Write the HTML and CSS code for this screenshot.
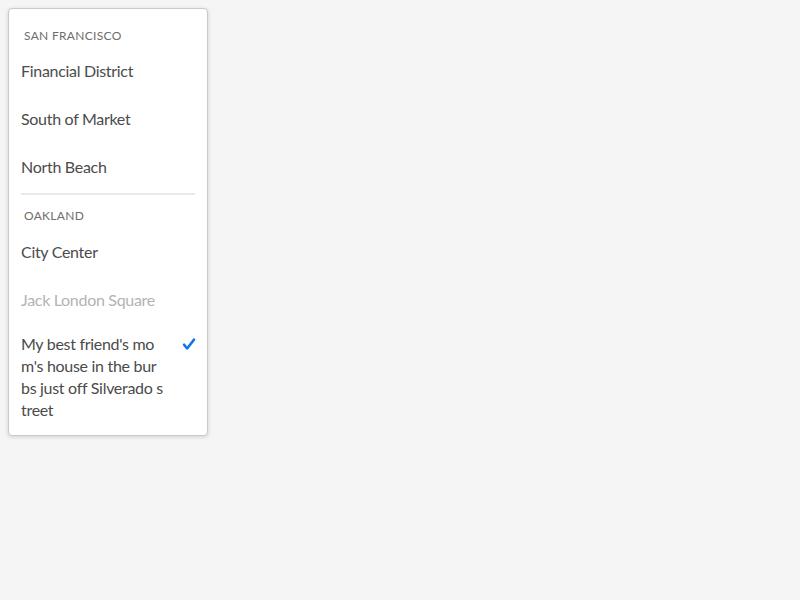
FILE: index.html
```html
<!DOCTYPE html>
<html lang="en">
<head>
<meta charset="utf-8">
<title>Menu</title>
<link rel="stylesheet" href="styles.css">
</head>
<body>
<div class="page">
  <div class="popover">
    <div class="menu" role="menu">
      <div class="section" role="group">
        <div class="heading">SAN FRANCISCO</div>
        <div class="item" role="menuitem"><span class="label">Financial District</span></div>
        <div class="item" role="menuitem"><span class="label">South of Market</span></div>
        <div class="item" role="menuitem"><span class="label">North Beach</span></div>
      </div>
      <div class="divider" role="separator"></div>
      <div class="section" role="group">
        <div class="heading">OAKLAND</div>
        <div class="item" role="menuitem"><span class="label">City Center</span></div>
        <div class="item is-disabled" role="menuitem" aria-disabled="true"><span class="label">Jack London Square</span></div>
        <div class="item is-selected" role="menuitemradio" aria-checked="true">
          <span class="label">My best friend's mom's house in the burbs just off Silverado street</span>
          <svg class="check" viewBox="0 0 14 14" aria-hidden="true"><path d="M5.125 12.625a1.25 1.25 0 0 1-.96-.45L1.04 8.425a1.25 1.25 0 0 1 1.92-1.6l2.136 2.563 5.922-7.536a1.25 1.25 0 1 1 1.964 1.545l-6.874 8.75a1.25 1.25 0 0 1-.965.478z"/></svg>
        </div>
      </div>
    </div>
  </div>
</div>
</body>
</html>
```
FILE: styles.css
```css
html, body {
  margin: 0;
  background: #f5f5f5;
}

body {
  font-family: Lato, "Liberation Sans", sans-serif;
}

.page {
  padding: 8px;
}

.popover {
  width: 200px;
  box-sizing: border-box;
  background: #ffffff;
  border: 1px solid #cacaca;
  border-radius: 4px;
  box-shadow: 0 1px 4px rgba(0, 0, 0, 0.15);
}

.menu {
  padding: 4px 0 1px;
}

.heading {
  padding: 14px 15px 3px;
  font-size: 12px;
  line-height: 17px;
  letter-spacing: 0.3px;
  color: #6e6e6e;
}

.divider + .section .heading {
  padding-top: 12px;
  padding-bottom: 4px;
}

.item {
  display: flex;
  align-items: center;
  box-sizing: border-box;
  min-height: 48px;
  padding: 11px 11px 11px 12px;
  font-size: 16px;
  line-height: 22px;
  letter-spacing: -0.3px;
  color: #4b4b4b;
}

.label {
  flex: 1;
  min-width: 0;
  word-break: break-all;
}

.item.is-disabled {
  color: #b3b3b3;
}

.item.is-selected {
  padding-top: 9px;
  padding-bottom: 13px;
}

.check {
  flex: none;
  align-self: flex-start;
  width: 14px;
  height: 14px;
  margin: 4px 0 0 18px;
  fill: #1473e6;
}

.divider {
  height: 2px;
  margin: 2px 12px 0;
  background: #eaeaea;
}
```
